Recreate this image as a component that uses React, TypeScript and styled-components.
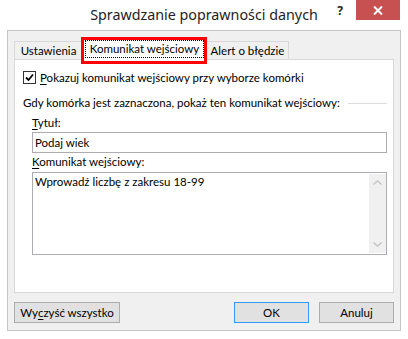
import React from "react";
import styled, { createGlobalStyle } from "styled-components";

const GlobalStyle = createGlobalStyle`
  html, body { margin: 0; padding: 0; background: #ffffff; }
  body { font-family: Lato, "Noto Sans", sans-serif; font-size: 11.5px; color: #000; }
  * { box-sizing: border-box; }
`;

const Window = styled.div`
  width: 408px;
  height: 339px;
  background: #ffffff;
  display: flex;
  flex-direction: column;
  overflow: hidden;
`;

const TitleBar = styled.div`
  height: 30px;
  display: grid;
  grid-template-columns: 1fr auto 1fr;
  align-items: start;
`;

const Title = styled.div`
  grid-column: 2;
  font-family: "Noto Sans", sans-serif;
  font-size: 14.3px;
  line-height: 30px;
  color: #1e1e1e;
  white-space: nowrap;
`;

const Controls = styled.div`
  grid-column: 3;
  justify-self: end;
  display: flex;
  align-items: flex-start;
  padding-right: 8px;
`;

const HelpGlyph = styled.div`
  font-family: "Noto Sans", sans-serif;
  font-size: 12px;
  font-weight: 700;
  line-height: 22px;
  color: #222;
  margin-right: 13px;
`;

const CloseButton = styled.div`
  width: 44px;
  height: 20px;
  background: #c75050;
  display: flex;
  align-items: center;
  justify-content: center;
`;

const Client = styled.div`
  margin: 0 7px;
  height: 301px;
  border: 1px solid #c5c5c5;
  background: #f0f0f0;
  padding: 8px 6px 0 6px;
  display: flex;
  flex-direction: column;
`;

const TabRow = styled.div`
  display: flex;
  align-items: flex-end;
  height: 20px;
`;

const Tab = styled.div<{ $w: number; $active?: boolean }>`
  position: relative;
  width: ${(p) => p.$w}px;
  height: ${(p) => (p.$active ? 21 : 18)}px;
  margin-bottom: ${(p) => (p.$active ? -1 : 0)}px;
  margin-left: ${(p) => (p.$active ? -1 : 0)}px;
  margin-right: ${(p) => (p.$active ? -1 : 0)}px;
  z-index: ${(p) => (p.$active ? 2 : 1)};
  background: ${(p) => (p.$active ? "#ffffff" : "#f0f0f0")};
  border: 1px solid #d9d9d9;
  border-bottom: none;
  display: flex;
  align-items: center;
  justify-content: center;
  padding-bottom: ${(p) => (p.$active ? 2 : 0)}px;
  white-space: nowrap;
`;

const FocusText = styled.span`
  outline: 1px dotted #000;
  outline-offset: 0;
  padding: 0 4px;
  line-height: 16px;
`;

const Highlight = styled.div`
  position: absolute;
  left: -2px;
  top: -3px;
  right: -1px;
  bottom: -4px;
  border: 3px solid #ff0000;
  pointer-events: none;
`;

const Panel = styled.div`
  height: 234px;
  background: #ffffff;
  border: 1px solid #d9d9d9;
  padding: 11px 6px 0 8px;
  display: flex;
  flex-direction: column;
`;

const CheckRow = styled.div`
  display: flex;
  align-items: center;
  gap: 4px;
  height: 13px;
`;

const CheckBox = styled.div`
  width: 13px;
  height: 13px;
  border: 1px solid #333333;
  background: #ffffff;
  display: flex;
  align-items: center;
  justify-content: center;
`;

const Label = styled.span`
  line-height: 16px;
  white-space: nowrap;
`;

const Key = styled.span`
  text-decoration: underline;
  text-underline-offset: 2px;
`;

const GroupRow = styled.div`
  display: flex;
  align-items: center;
  gap: 8px;
  margin-top: 11px;
  height: 16px;
`;

const GroupLine = styled.div`
  flex: 1;
  height: 1px;
  background: #dcdcdc;
`;

const Indented = styled.div`
  padding-left: 9px;
  display: flex;
  flex-direction: column;
`;

const FieldLabel = styled.div<{ $mt: number }>`
  margin-top: ${(p) => p.$mt}px;
  line-height: 16px;
  height: 16px;
`;

const TextBox = styled.div`
  margin-top: 1px;
  height: 21px;
  border: 1px solid #abadb3;
  background: #fff;
  padding: 0 2px;
  line-height: 19px;
`;

const TextArea = styled.div`
  margin-top: 2px;
  height: 83px;
  border: 1px solid #abadb3;
  background: #fff;
  display: flex;
`;

const AreaText = styled.div`
  flex: 1;
  padding: 1px 2px;
  line-height: 16px;
`;

const ScrollBar = styled.div`
  width: 17px;
  margin: 1px 0;
  background: #f0f0f0;
  display: flex;
  flex-direction: column;
  justify-content: space-between;
`;

const ScrollButton = styled.div`
  height: 17px;
  display: flex;
  align-items: center;
  justify-content: center;
`;

const ButtonRow = styled.div`
  display: flex;
  align-items: center;
  margin-top: 9px;
  gap: 10px;
`;

const Spacer = styled.div`
  flex: 1;
`;

const Button = styled.div<{ $w: number; $default?: boolean }>`
  width: ${(p) => p.$w}px;
  height: 21px;
  background: #e1e1e1;
  border: 1px solid ${(p) => (p.$default ? "#3399ff" : "#adadad")};
  display: flex;
  align-items: center;
  justify-content: center;
  line-height: 16px;
  white-space: nowrap;
`;

export default function App() {
  return (
    <>
      <GlobalStyle />
      <Window>
        <TitleBar>
          <Title>Sprawdzanie poprawności danych</Title>
          <Controls>
            <HelpGlyph>?</HelpGlyph>
            <CloseButton>
              <svg width="10" height="9" viewBox="0 0 10 9">
                <path d="M1 0.5 L9 8.5 M9 0.5 L1 8.5" stroke="#fff" strokeWidth="2" />
              </svg>
            </CloseButton>
          </Controls>
        </TitleBar>
        <Client>
          <TabRow>
            <Tab $w={69}>Ustawienia</Tab>
            <Tab $w={125} $active>
              <FocusText>Komunikat wejściowy</FocusText>
              <Highlight />
            </Tab>
            <Tab $w={83}>Alert o błędzie</Tab>
          </TabRow>
          <Panel>
            <CheckRow>
              <CheckBox>
                <svg width="9" height="9" viewBox="0 0 9 9">
                  <path d="M1 4.5 L3.5 7 L8 1.5" stroke="#000" strokeWidth="1.8" fill="none" />
                </svg>
              </CheckBox>
              <Label>
                <Key>P</Key>okazuj komunikat wejściowy przy wyborze komórki
              </Label>
            </CheckRow>
            <GroupRow>
              <Label>Gdy komórka jest zaznaczona, pokaż ten komunikat wejściowy:</Label>
              <GroupLine />
            </GroupRow>
            <Indented>
              <FieldLabel $mt={4}>
                <Key>T</Key>ytuł:
              </FieldLabel>
              <TextBox>Podaj wiek</TextBox>
              <FieldLabel $mt={1}>
                <Key>K</Key>omunikat wejściowy:
              </FieldLabel>
              <TextArea>
                <AreaText>Wprowadź liczbę z zakresu 18-99</AreaText>
                <ScrollBar>
                  <ScrollButton>
                    <svg width="9" height="5" viewBox="0 0 9 5">
                      <path d="M0.5 4.5 L4.5 0.8 L8.5 4.5" stroke="#c2c2c2" strokeWidth="1.3" fill="none" />
                    </svg>
                  </ScrollButton>
                  <ScrollButton>
                    <svg width="9" height="5" viewBox="0 0 9 5">
                      <path d="M0.5 0.5 L4.5 4.2 L8.5 0.5" stroke="#c2c2c2" strokeWidth="1.3" fill="none" />
                    </svg>
                  </ScrollButton>
                </ScrollBar>
              </TextArea>
            </Indented>
          </Panel>
          <ButtonRow>
            <Button $w={106}>
              Wy<Key>c</Key>zyść wszystko
            </Button>
            <Spacer />
            <Button $w={75} $default>OK</Button>
            <Button $w={75}>Anuluj</Button>
          </ButtonRow>
        </Client>
      </Window>
    </>
  );
}
